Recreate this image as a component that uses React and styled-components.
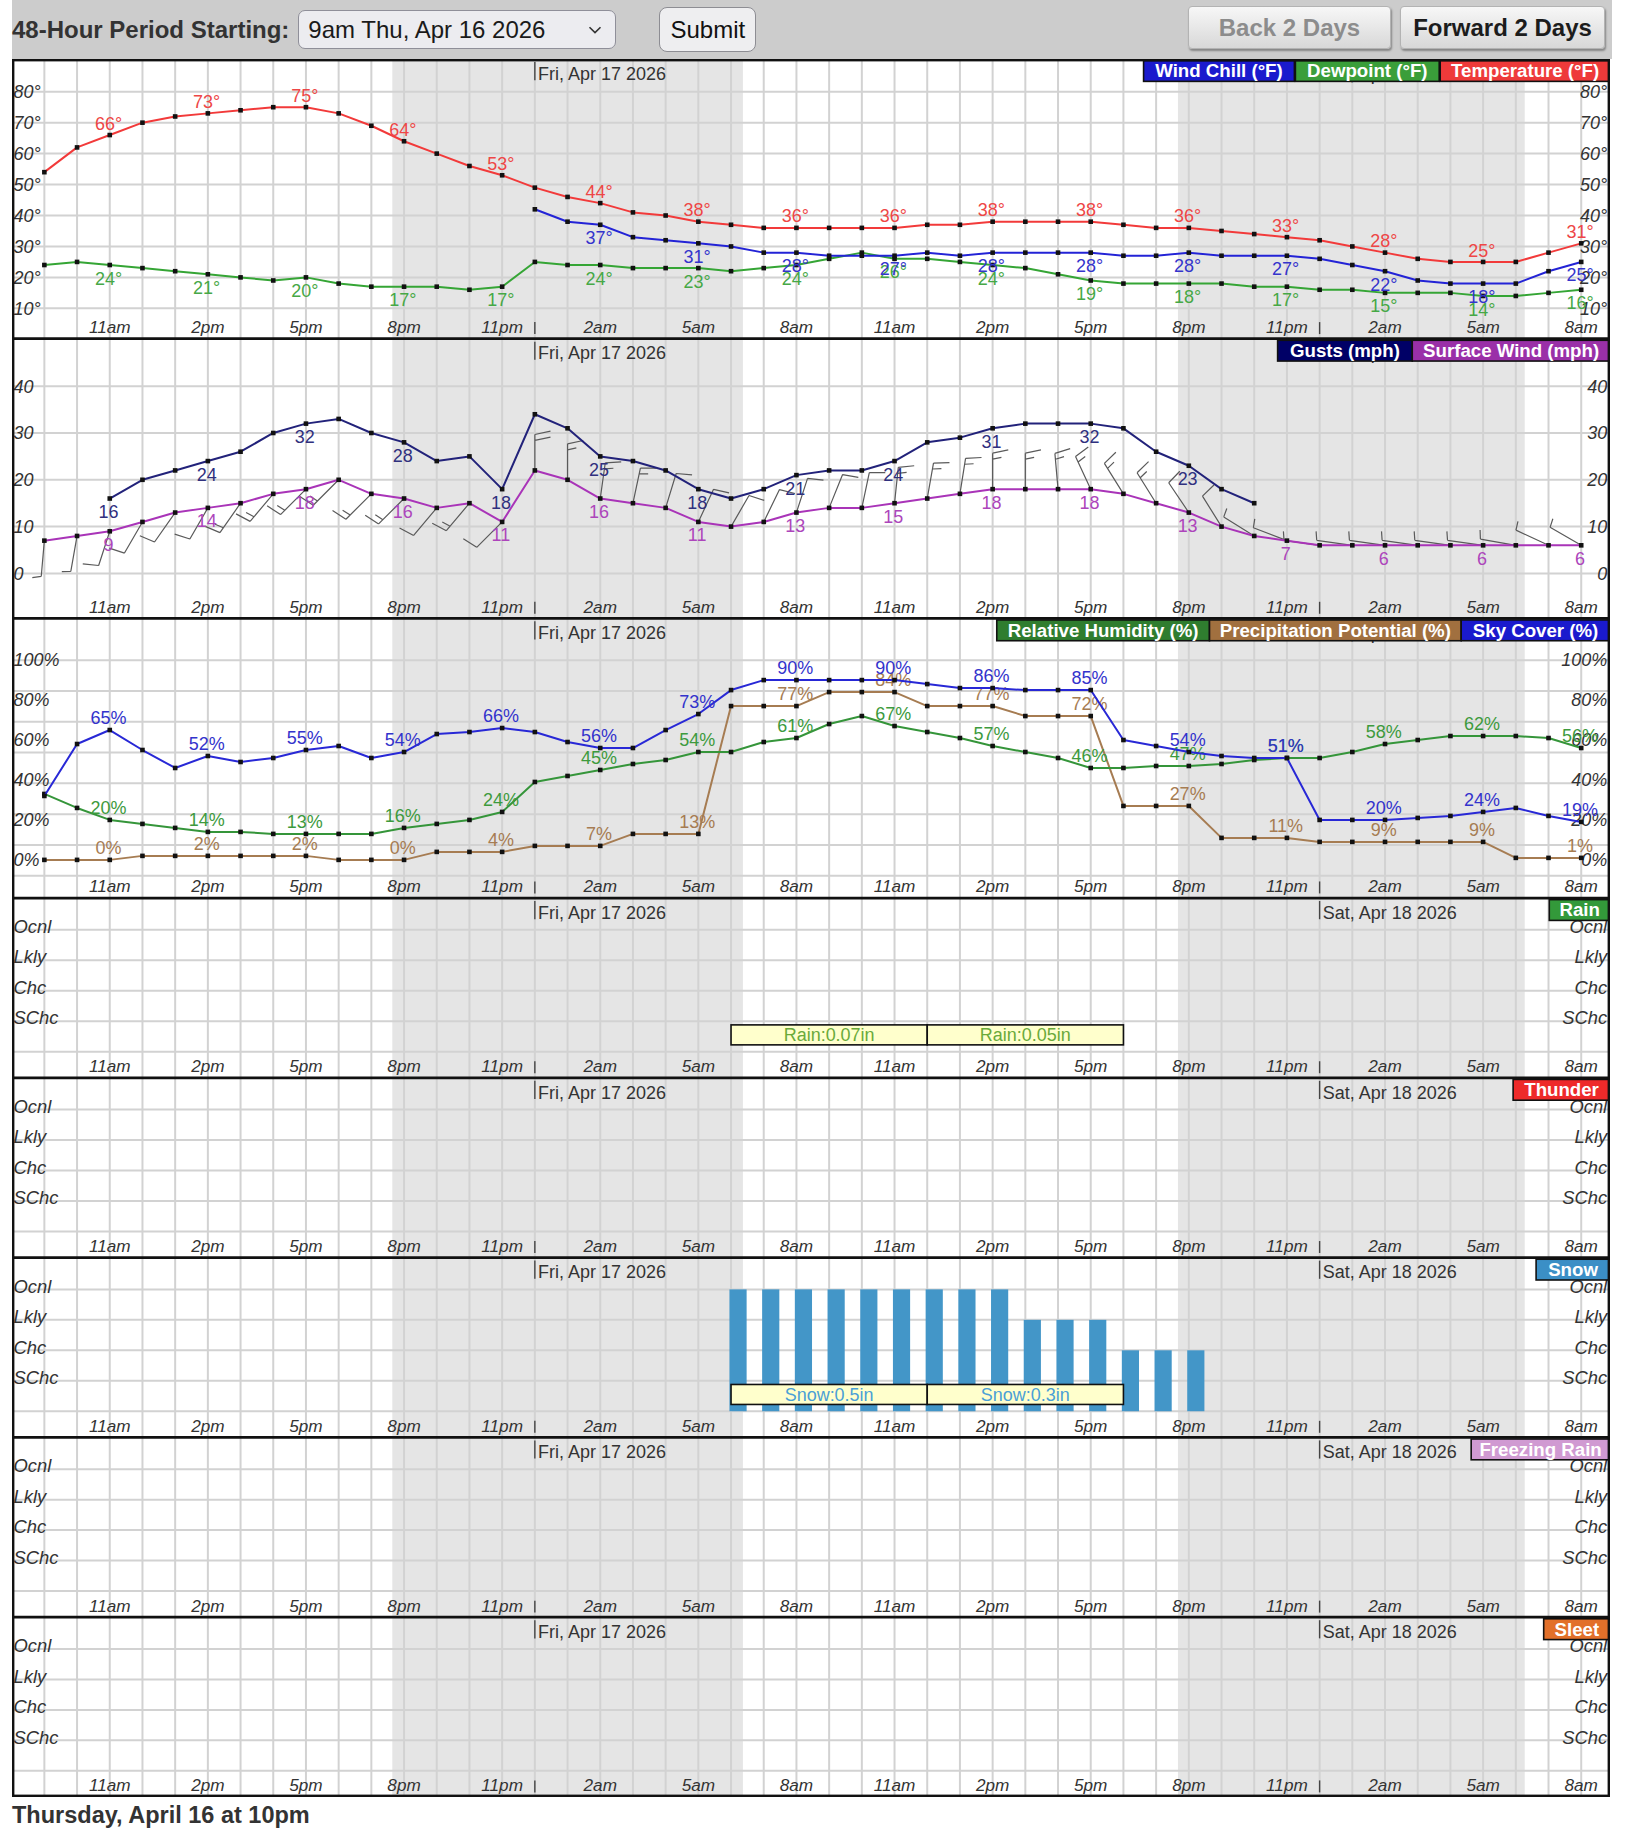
import React from "react";
import styled, { createGlobalStyle } from "styled-components";

const GlobalStyle = createGlobalStyle`
  html, body { margin: 0; padding: 0; background: #ffffff; }
  body { font-family: "Liberation Sans", Arial, Helvetica, sans-serif; color: #222; }
`;

const Page = styled.div`
  width: 1600px;
  padding-left: 12px;
`;

const TopBar = styled.form`
  display: flex;
  align-items: center;
  height: 59px;
  background: #cccccc;
  padding-right: 7px;
  box-sizing: border-box;
`;

const FieldLabel = styled.label`
  font-weight: bold;
  font-size: 24px;
  color: #333;
  white-space: nowrap;
`;

const SelectWrap = styled.div`
  position: relative;
  width: 318px;
  height: 39px;
  margin-left: 9px;
`;

const PeriodSelect = styled.select`
  appearance: none;
  -webkit-appearance: none;
  width: 100%;
  height: 100%;
  box-sizing: border-box;
  border: 1.5px solid #8f8f99;
  border-radius: 7px;
  background: #ececf0;
  font-family: "Liberation Sans", Arial, sans-serif;
  font-size: 24px;
  color: #1a1a1a;
  padding: 0 0 0 9px;
  margin: 0;
`;

const Chevron = styled.svg`
  position: absolute;
  right: 14px;
  top: 16px;
  pointer-events: none;
`;

const SubmitButton = styled.button`
  margin-left: 43px;
  width: 97px;
  height: 45px;
  box-sizing: border-box;
  border: 1.5px solid #8d8d93;
  border-radius: 8px;
  background: #eeeef0;
  font-family: "Liberation Sans", Arial, sans-serif;
  font-size: 24px;
  color: #111;
  padding: 0;
`;

const NavButton = styled.button`
  align-self: flex-start;
  margin-top: 6px;
  margin-left: ${(p) => (p.$first ? "auto" : "9px")};
  width: ${(p) => p.$w}px;
  height: 43px;
  box-sizing: border-box;
  font-family: "Liberation Sans", Arial, sans-serif;
  font-weight: bold;
  font-size: 24px;
  color: ${(p) => (p.disabled ? "#8c8c8c" : "#1c1c1c")};
  background: linear-gradient(#f7f7f7, #e6e6e6 55%, #d8d8d8);
  border: 1px solid #b3b3b3;
  border-radius: 4px;
  box-shadow: 1px 2px 2px rgba(0, 0, 0, 0.35);
  padding: 0;
`;

const ChartSvg = styled.svg`
  display: block;
  width: 1598px;
  height: 1738px;
  background: #ffffff;
`;

const Footer = styled.div`
  margin-top: 5px;
  font-weight: bold;
  font-size: 23.5px;
  color: #333;
`;

/* ---------- SVG parts ---------- */
const NightShade = styled.rect`
  fill: #e5e5e5;
`;
const GridLine = styled.line`
  stroke: #d2d2d2;
  stroke-width: 1;
`;
const Separator = styled.line`
  stroke: #111;
  stroke-width: 1.4;
`;
const Frame = styled.rect`
  fill: none;
  stroke: #111;
  stroke-width: 1.2;
`;
const Tick = styled.line`
  stroke: #444;
  stroke-width: 0.7;
`;
const TimeLabel = styled.text`
  font-family: "Liberation Sans", Arial, sans-serif;
  font-style: italic;
  font-size: 8.6px;
  fill: #333;
  text-anchor: middle;
`;
const AxisLabel = styled.text`
  font-family: "Liberation Sans", Arial, sans-serif;
  font-style: italic;
  font-size: 9px;
  fill: #333;
  text-anchor: ${(p) => (p.$end ? "end" : "start")};
`;
const LevelLabel = styled(AxisLabel)`
  font-size: 9.2px;
`;
const DateLabel = styled.text`
  font-family: "Liberation Sans", Arial, sans-serif;
  font-size: 9px;
  fill: #333;
`;
const ValueLabel = styled.text`
  font-family: "Liberation Sans", Arial, sans-serif;
  font-size: 9px;
  fill: ${(p) => p.$color};
  text-anchor: middle;
`;
const LegendBox = styled.rect`
  fill: ${(p) => p.$bg};
  stroke: #111;
  stroke-width: 0.8;
`;
const LegendText = styled.text`
  font-family: "Liberation Sans", Arial, sans-serif;
  font-weight: bold;
  font-size: 9.35px;
  fill: #ffffff;
  text-anchor: middle;
`;
const SeriesLine = styled.polyline`
  fill: none;
  stroke: ${(p) => p.$color};
  stroke-width: 1;
  stroke-linejoin: round;
`;
const PointMark = styled.rect`
  fill: #111;
`;
const BarbPath = styled.path`
  fill: none;
  stroke: #5a5a5a;
  stroke-width: 0.6;
`;
const SnowBar = styled.rect`
  fill: #4396c8;
`;
const AmountBox = styled.rect`
  fill: #ffffcc;
  stroke: #111;
  stroke-width: 0.8;
`;
const AmountText = styled.text`
  font-family: "Liberation Sans", Arial, sans-serif;
  font-size: 9px;
  fill: ${(p) => p.$color};
  text-anchor: middle;
`;

/* ---------- geometry & data ---------- */
const W = 800;
const X0 = 16.2;
const DX = 16.37;
const xh = (h) => X0 + DX * h;
const TOPS = [0, 140, 280, 420, 510, 600, 690, 780];
const BOTTOM = 870;
const NIGHTS = [
  [190.4, 365.9],
  [583.7, 757.3],
];
const LABEL_HOURS = [2, 5, 8, 11, 14, 17, 20, 23, 26, 29, 32, 35, 38, 41, 44, 47];
const TIME_NAMES = ["11am", "2pm", "5pm", "8pm", "11pm", "2am", "5am", "8am", "11am", "2pm", "5pm", "8pm", "11pm", "2am", "5am", "8am"];

const yT = (t) => 140.3 - 1.549 * t;
const yW = (v) => 257.5 - 2.343 * v;
const yH = (p) => 400.9 - p;

const temp = [54,62,66,70,72,73,74,75,75,73,69,64,60,56,53,49,46,44,41,40,38,37,36,36,36,36,36,37,37,38,38,38,38,37,36,36,35,34,33,32,30,28,26,25,25,25,28,31];
const dew = [24,25,24,23,22,21,20,19,20,18,17,17,17,16,17,25,24,24,23,23,23,22,23,24,26,28,26,26,25,24,23,21,19,18,18,18,18,17,17,16,16,15,15,15,14,14,15,16];
const chill = [42,38,37,33,32,31,30,28,28,27,27,27,28,27,28,28,28,28,27,27,28,27,27,27,26,24,22,19,18,18,18,22,25];
const surface = [7,8,9,11,13,14,15,17,18,20,17,16,14,15,11,22,20,16,15,14,11,10,11,13,14,14,15,16,17,18,18,18,18,17,15,13,10,8,7,6,6,6,6,6,6,6,6,6];
const gust = [16,20,22,24,26,30,32,33,30,28,24,25,18,34,31,25,24,22,18,16,18,21,22,22,24,28,29,31,32,32,32,31,26,23,18,15];
const windDir = [185,190,198,210,215,210,215,220,225,225,225,225,220,220,225,0,0,8,12,17,25,30,26,18,22,12,6,10,9,0,0,355,335,328,328,326,328,302,291,278,278,278,278,278,278,280,295,300];
const sky = [32,58,65,55,46,52,49,51,55,57,51,54,63,64,66,64,59,56,56,65,73,85,90,90,90,90,90,88,86,86,85,85,85,60,57,54,52,51,51,20,20,20,21,22,24,26,22,19];
const rh = [33,26,20,18,16,14,14,13,13,13,13,16,18,20,24,39,42,45,48,50,54,54,59,61,68,72,67,64,61,57,54,51,46,46,47,47,48,50,51,51,54,58,60,62,62,62,61,56];
const pp = [0,0,0,2,2,2,2,2,2,0,0,0,4,4,4,7,7,7,13,13,13,77,77,77,84,84,84,77,77,77,72,72,72,27,27,27,11,11,11,9,9,9,9,9,9,1,1,1];

const LEVELS = ["Ocnl", "Lkly", "Chc", "SChc"];
const levelY = (top, k) => top + 15.9 + 15.25 * k;

/* ---------- SVG components ---------- */
function Series({ data, start = 0, yf, color, labelColor, above, suffix = "", lift = 2.7, drop = 9.8 }) {
  const pts = data.map((v, i) => [xh(start + i), yf(v)]);
  return (
    <g>
      <SeriesLine $color={color} points={pts.map((p) => p[0].toFixed(2) + "," + p[1].toFixed(2)).join(" ")} />
      {pts.map(([x, y], i) => (
        <PointMark key={i} x={x - 1.15} y={y - 1.15} width={2.3} height={2.3} />
      ))}
      {LABEL_HOURS.filter((h) => h >= start && h < start + data.length).map((h) => {
        const v = data[h - start];
        const y = yf(v);
        return (
          <ValueLabel key={h} $color={labelColor} x={xh(h) - 0.6} y={above ? y - lift : y + drop}>
            {v}
            {suffix}
          </ValueLabel>
        );
      })}
    </g>
  );
}

function Barb({ x, y, dir, mph }) {
  const r = (dir * Math.PI) / 180;
  const dx = Math.sin(r);
  const dy = -Math.cos(r);
  const L = 18;
  const a = (78 * Math.PI) / 180;
  const fx = dx * Math.cos(a) - dy * Math.sin(a);
  const fy = dx * Math.sin(a) + dy * Math.cos(a);
  let kt = Math.round((mph * 0.869) / 5) * 5;
  const feathers = [];
  let pos = L;
  while (kt >= 10) {
    feathers.push([pos, 8]);
    pos -= 3;
    kt -= 10;
  }
  if (kt >= 5) feathers.push([pos, 4.5]);
  let d = `M${x.toFixed(2)},${y.toFixed(2)}L${(x + dx * L).toFixed(2)},${(y + dy * L).toFixed(2)}`;
  feathers.forEach(([p, len]) => {
    const bx = x + dx * p;
    const by = y + dy * p;
    d += `M${bx.toFixed(2)},${by.toFixed(2)}l${(fx * len).toFixed(2)},${(fy * len).toFixed(2)}`;
  });
  return <BarbPath d={d} />;
}

function Legends({ top, items }) {
  return (
    <g>
      {items.map((it) => (
        <g key={it.label}>
          <LegendBox $bg={it.bg} x={it.x} y={top + 0.8} width={it.w} height={10.4} />
          <LegendText x={it.x + it.w / 2} y={top + 9.2}>
            {it.label}
          </LegendText>
        </g>
      ))}
    </g>
  );
}

function PanelBase({ top, bottom, hLines }) {
  return (
    <g>
      {NIGHTS.map(([a, b], i) => (
        <NightShade key={i} x={a} y={top} width={b - a} height={bottom - top} />
      ))}
      {Array.from({ length: 48 }, (_, h) => (
        <GridLine key={"v" + h} x1={xh(h)} x2={xh(h)} y1={top} y2={bottom} />
      ))}
      {hLines.map((y, i) => (
        <GridLine key={"h" + i} x1={0} x2={W} y1={y} y2={y} />
      ))}
      {LABEL_HOURS.map((h, i) => (
        <TimeLabel key={"t" + h} x={xh(h)} y={bottom - 2.8}>
          {TIME_NAMES[i]}
        </TimeLabel>
      ))}
      {[15, 39].map((h) => (
        <g key={"d" + h}>
          <Tick x1={xh(h)} x2={xh(h)} y1={bottom - 8.3} y2={bottom - 2.3} />
          <Tick x1={xh(h)} x2={xh(h)} y1={top + 1.5} y2={top + 10.6} />
          <DateLabel x={xh(h) + 1.6} y={top + 10.4}>
            {h === 15 ? "Fri, Apr 17 2026" : "Sat, Apr 18 2026"}
          </DateLabel>
        </g>
      ))}
    </g>
  );
}

function SideLabels({ items, Comp = AxisLabel, dy = 3.2 }) {
  return (
    <g>
      {items.map(([y, t]) => (
        <g key={t}>
          <Comp x={0.8} y={y + dy}>
            {t}
          </Comp>
          <Comp $end x={798.6} y={y + dy}>
            {t}
          </Comp>
        </g>
      ))}
    </g>
  );
}

function TemperaturePanel() {
  const top = TOPS[0];
  const vals = [80, 70, 60, 50, 40, 30, 20, 10];
  return (
    <g>
      <PanelBase top={top} bottom={TOPS[1]} hLines={vals.map(yT)} />
      <SideLabels items={vals.map((v) => [yT(v), v + "°"])} />
      <Series data={dew} yf={yT} color="#35a535" labelColor="#46a846" suffix="°" />
      <Series data={chill} start={15} yf={yT} color="#2323d6" labelColor="#3434cc" suffix="°" />
      <Series data={temp} yf={yT} color="#f23a3a" labelColor="#ee4646" suffix="°" above />
      <Legends
        top={top}
        items={[
          { label: "Wind Chill (°F)", x: 566.5, w: 75.5, bg: "#1a1acd" },
          { label: "Dewpoint (°F)", x: 642.5, w: 72, bg: "#3a9e3a" },
          { label: "Temperature (°F)", x: 715, w: 85, bg: "#ee3a3a" },
        ]}
      />
    </g>
  );
}

function WindPanel() {
  const top = TOPS[1];
  const vals = [40, 30, 20, 10, 0];
  return (
    <g>
      <PanelBase top={top} bottom={TOPS[2]} hLines={vals.map(yW)} />
      <SideLabels items={vals.map((v) => [yW(v), String(v)])} />
      {surface.map((v, h) => (
        <Barb key={h} x={xh(h)} y={yW(v)} dir={windDir[h]} mph={v} />
      ))}
      <Series data={gust} start={2} yf={yW} color="#22227a" labelColor="#30307e" />
      <Series data={surface} yf={yW} color="#a934b8" labelColor="#ad45bb" />
      <Legends
        top={top}
        items={[
          { label: "Gusts (mph)", x: 633.6, w: 67.4, bg: "#000066" },
          { label: "Surface Wind (mph)", x: 701, w: 99, bg: "#9a30a8" },
        ]}
      />
    </g>
  );
}

function HumidityPanel() {
  const top = TOPS[2];
  const lines = Array.from({ length: 8 }, (_, k) => 301 + 15.4 * k);
  const vals = [100, 80, 60, 40, 20, 0];
  return (
    <g>
      <PanelBase top={top} bottom={TOPS[3]} hLines={lines} />
      <SideLabels items={vals.map((v) => [yH(v), v + "%"])} />
      <Series data={pp} yf={yH} color="#a67c52" labelColor="#a67c52" suffix="%" above lift={3} />
      <Series data={rh} yf={yH} color="#35953a" labelColor="#3d9a3d" suffix="%" above lift={3} />
      <Series data={sky} yf={yH} color="#2828d6" labelColor="#3333cc" suffix="%" above lift={3} />
      <Legends
        top={top}
        items={[
          { label: "Relative Humidity (%)", x: 493, w: 106.5, bg: "#2f7d2f" },
          { label: "Precipitation Potential (%)", x: 599.5, w: 126, bg: "#a1703f" },
          { label: "Sky Cover (%)", x: 725.5, w: 74.5, bg: "#1a1acd" },
        ]}
      />
    </g>
  );
}

function PrecipPanel({ index, legend, bars = [], amounts = [], amountColor }) {
  const top = TOPS[index];
  const bottom = index + 1 < TOPS.length ? TOPS[index + 1] : BOTTOM;
  const lines = Array.from({ length: 5 }, (_, k) => levelY(top, k));
  return (
    <g>
      <PanelBase top={top} bottom={bottom} hLines={lines} />
      {bars.map(([h, k]) => (
        <SnowBar key={h} x={xh(h) - 0.8} y={levelY(top, k)} width={8.6} height={levelY(top, 4) - levelY(top, k)} />
      ))}
      {amounts.map(([h0, h1, text]) => (
        <g key={text}>
          <AmountBox x={xh(h0)} y={top + 63.5} width={xh(h1) - xh(h0)} height={10} />
          <AmountText $color={amountColor} x={(xh(h0) + xh(h1)) / 2} y={top + 71.6}>
            {text}
          </AmountText>
        </g>
      ))}
      <SideLabels Comp={LevelLabel} dy={1.6} items={LEVELS.map((t, k) => [levelY(top, k), t])} />
      <Legends top={top} items={[legend]} />
    </g>
  );
}

const snowBars = [];
for (let h = 21; h <= 35; h++) snowBars.push([h, h <= 29 ? 0 : h <= 32 ? 1 : 2]);

function ForecastChart() {
  return (
    <ChartSvg viewBox="0 0 800 870" preserveAspectRatio="none">
      <rect x={0} y={0} width={W} height={BOTTOM} fill="#ffffff" />
      <TemperaturePanel />
      <WindPanel />
      <HumidityPanel />
      <PrecipPanel
        index={3}
        legend={{ label: "Rain", x: 769.6, w: 30.4, bg: "#33993a" }}
        amounts={[
          [21, 27, "Rain:0.07in"],
          [27, 33, "Rain:0.05in"],
        ]}
        amountColor="#6aaa3a"
      />
      <PrecipPanel index={4} legend={{ label: "Thunder", x: 751.5, w: 48.5, bg: "#ee2a2a" }} />
      <PrecipPanel
        index={5}
        legend={{ label: "Snow", x: 763, w: 37, bg: "#3b8fc6" }}
        bars={snowBars}
        amounts={[
          [21, 27, "Snow:0.5in"],
          [27, 33, "Snow:0.3in"],
        ]}
        amountColor="#4aa0d6"
      />
      <PrecipPanel index={6} legend={{ label: "Freezing Rain", x: 730.5, w: 69.5, bg: "#d09ad2" }} />
      <PrecipPanel index={7} legend={{ label: "Sleet", x: 766.8, w: 33.2, bg: "#e2702a" }} />
      {TOPS.slice(1).map((y) => (
        <Separator key={y} x1={0} x2={W} y1={y} y2={y} />
      ))}
      <Frame x={0.6} y={0.6} width={W - 1.2} height={BOTTOM - 1.2} />
    </ChartSvg>
  );
}

export default function App() {
  return (
    <>
      <GlobalStyle />
      <Page>
        <TopBar onSubmit={(e) => e.preventDefault()}>
          <FieldLabel htmlFor="period">48-Hour Period Starting:</FieldLabel>
          <SelectWrap>
            <PeriodSelect id="period" defaultValue="0">
              <option value="0">9am Thu, Apr 16 2026</option>
            </PeriodSelect>
            <Chevron width="14" height="8" viewBox="0 0 14 8">
              <path d="M1.5 1.2 L7 6.6 L12.5 1.2" fill="none" stroke="#333" strokeWidth="1.6" />
            </Chevron>
          </SelectWrap>
          <SubmitButton type="submit">Submit</SubmitButton>
          <NavButton type="button" $first $w={203} disabled>
            Back 2 Days
          </NavButton>
          <NavButton type="button" $w={205}>
            Forward 2 Days
          </NavButton>
        </TopBar>
        <ForecastChart />
        <Footer>Thursday, April 16 at 10pm</Footer>
      </Page>
    </>
  );
}
